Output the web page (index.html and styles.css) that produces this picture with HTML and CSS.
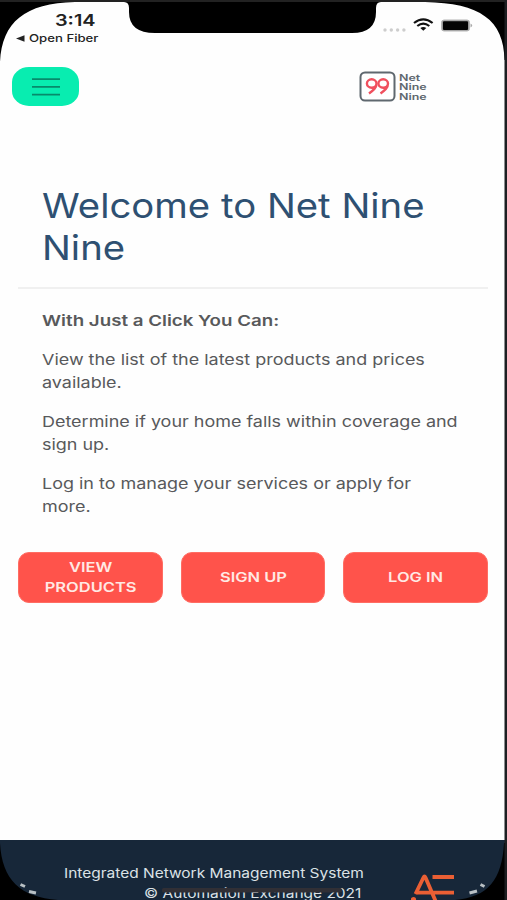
FILE: index.html
```html
<!DOCTYPE html>
<html lang="en">
<head>
  <meta charset="UTF-8">
  <meta name="viewport" content="width=device-width, initial-scale=1">
  <title>Net Nine Nine</title>
  <link rel="stylesheet" href="styles.css">
</head>
<body>
  <div class="phone">
    <div class="status-bar">
      <div class="status-left">
        <div class="time"><span class="wide">3:14</span></div>
        <div class="back-app">
          <svg width="9" height="7" viewBox="0 0 9 7"><path d="M0 3.5L8.5 0.2V6.8z" fill="#222"/></svg>
          <span class="wide">Open Fiber</span>
        </div>
      </div>
      <svg class="status-icons" width="94" height="18" viewBox="0 0 94 18">
        <g fill="#cdcdcd">
          <circle cx="5" cy="13" r="1.700"/><circle cx="11.300" cy="13" r="1.700"/>
          <circle cx="17.600" cy="13" r="1.700"/><circle cx="23.900" cy="13" r="1.700"/>
        </g>
        <g fill="none" stroke="#111" stroke-width="2.200">
          <path d="M34 6Q43.300 -1.400 52.600 6"/>
          <path d="M37.300 9Q43.300 4.300 49.300 9"/>
        </g>
        <path d="M40.300 11Q43.300 8.800 46.300 11L43.300 13.800z" fill="#111"/>
        <rect x="61.500" y="3" width="28" height="11" rx="2.500" fill="#999" stroke="#b5b5b5"/>
        <rect x="63" y="4.200" width="25" height="8.800" rx="1" fill="#050505"/>
        <path d="M90.500 6.500q3.500 2 0 4z" fill="#aaa"/>
      </svg>
    </div>

    <header class="navbar">
      <button class="menu-btn" aria-label="Menu">
        <svg width="30" height="20" viewBox="0 0 30 20">
          <path d="M1 2.200h28M1 9.900h28M1 17.700h28" stroke="#078b6b" stroke-width="1.700"/>
        </svg>
      </button>
      <div class="logo">
        <svg width="37" height="31" viewBox="0 0 37 31">
          <rect x="1.500" y="1.500" width="34" height="28" rx="4.500" fill="#fff" stroke="#5f686f" stroke-width="2"/>
          <g fill="none" stroke="#f0505e" stroke-width="2.400">
            <path d="M17.500 12.500a4.800 4.200 0 1 0-4.800 4.200c2.700 0 4.800-1.600 4.800-4.200c0 4.500-3.200 7-7.500 10"/>
            <path d="M29 12.500a4.800 4.200 0 1 0-4.800 4.200c2.700 0 4.800-1.600 4.800-4.200c0 4.500-3.200 7-7.500 10"/>
          </g>
        </svg>
        <div class="logo-text">
          <span>Net</span>
          <span>Nine</span>
          <span>Nine</span>
        </div>
      </div>
    </header>

    <main class="content">
      <h1><span class="wide">Welcome to Net Nine<br>Nine</span></h1>
      <hr>
      <div class="intro">
        <p class="lead"><span class="wide">With Just a Click You Can:</span></p>
        <p><span class="wide">View the list of the latest products and prices<br>available.</span></p>
        <p><span class="wide">Determine if your home falls within coverage and<br>sign up.</span></p>
        <p><span class="wide">Log in to manage your services or apply for<br>more.</span></p>
      </div>
      <div class="actions">
        <button class="btn"><span class="wide">VIEW<br>PRODUCTS</span></button>
        <button class="btn"><span class="wide">SIGN UP</span></button>
        <button class="btn"><span class="wide">LOG IN</span></button>
      </div>
    </main>

    <footer class="footer">
      <div class="footer-text">
        <div><span class="wide">Integrated Network Management System</span></div>
        <div><span class="wide">© Automation Exchange 2021</span></div>
      </div>
      <svg class="ae-logo" width="46" height="28" viewBox="0 0 46 28" fill="none" stroke="#ea5f34" stroke-width="3.800">
        <path d="M4.500 20L12.500 3.500Q13.500 1.500 14.500 3.500L25 28M4.500 18.700H43M21.500 3H43"/>
        <circle cx="2.500" cy="25.500" r="2.600" fill="#ea5f34" stroke="none"/>
      </svg>
    </footer>

    <!-- device frame: corners, notch, home indicator -->
    <svg class="bezel" width="507" height="900" viewBox="0 0 507 900">
      <path d="M0 0H507V60H504.500C504 20 480 3 425 2H381Q376 2 376 8V12Q376 33 352 33H155Q129 33 129 12V8Q129 2 124 2H75C25 3 2 22 0 62z" fill="#000"/>
      <path d="M0 843C2 880 20 897 58 900H0z" fill="#000"/>
      <path d="M504 843C502 880 488 897 455 900H507V843z" fill="#000"/>
      <rect x="0" y="0" width="507" height="2" fill="#222"/>
      <rect x="504.500" y="0" width="2.500" height="900" fill="#1d1f22"/>
      <rect x="162" y="888" width="180" height="4.500" rx="1.500" fill="#302f35"/>
      <g fill="none" stroke="#b9c0c4" stroke-width="3">
        <path d="M20.500 884.500L25 886.500M29 891.500L36 893"/>
        <path d="M480.500 884.500L484.500 886.500M477 891L469.500 893"/>
      </g>
    </svg>
  </div>
</body>
</html>
```
FILE: styles.css
```css
* {
  box-sizing: border-box;
}

body {
  margin: 0;
  font-family: Inter, "Liberation Sans", sans-serif;
  color: #58595b;
}

.phone {
  position: relative;
  display: flex;
  flex-direction: column;
  width: 507px;
  height: 900px;
  overflow: hidden;
  background: #fefefe;
}

/* stretched lettering */
.wide {
  display: inline-block;
  white-space: nowrap;
  transform: scaleX(1.197);
  transform-origin: left;
}

.status-bar {
  display: flex;
  justify-content: space-between;
  height: 56px;
  padding: 10px 33px 0 16px;
  color: #222;
}

.time {
  height: 20px;
  padding-left: 39px;
  font-size: 16px;
  font-weight: 600;
  line-height: 20px;
}

.time .wide {
  transform: scaleX(1.24);
}

.back-app {
  display: flex;
  align-items: center;
  gap: 4px;
  height: 16px;
  font-size: 11px;
  font-weight: 500;
}

.status-icons {
  margin-top: 7px;
}

.navbar {
  display: flex;
  justify-content: space-between;
  align-items: flex-start;
  height: 129px;
  padding: 11px 79px 0 12px;
}

.menu-btn {
  display: flex;
  align-items: center;
  justify-content: center;
  width: 67px;
  height: 39px;
  padding: 0;
  border: none;
  border-radius: 17px / 15px;
  background: #08edb0;
}

.logo {
  display: flex;
  gap: 3px;
  margin-top: 4px;
}

.logo-text {
  display: flex;
  flex-direction: column;
  width: 29px;
  padding-top: 2px;
  font-size: 9px;
  font-weight: 600;
  line-height: 9.4px;
  color: #5f686f;
}

.logo-text span {
  transform: scaleX(1.38);
  transform-origin: left;
}

.content {
  padding: 0 19px 0 18px;
}

h1 {
  height: 102px;
  margin: 0;
  padding-left: 24px;
  font-size: 34px;
  font-weight: 400;
  line-height: 41.5px;
  color: #2e5072;
}

h1 .wide {
  transform: scaleX(1.127);
}

hr {
  height: 2px;
  margin: 0;
  border: none;
  background: #f0f0f0;
}

.intro {
  padding: 20px 0 0 24px;
  font-size: 15px;
  line-height: 23.3px;
}

.intro p {
  margin: 0 0 15.5px;
}

.intro .lead {
  font-weight: 600;
}

.lead .wide {
  transform: scaleX(1.248);
}

.actions {
  display: flex;
  gap: 18px;
  margin-top: 33px;
}

.btn {
  flex: 1;
  height: 51px;
  padding: 0;
  border: 1px solid #ff6d63;
  border-radius: 11px;
  background: #ff534b;
  color: #ffe9e4;
  font-family: inherit;
  font-size: 13.5px;
  font-weight: 600;
  line-height: 20.5px;
}

.btn .wide {
  transform: scaleX(1.22);
  transform-origin: center;
}

.footer {
  display: flex;
  height: 60px;
  margin-top: auto;
  padding: 23px 0 0 64px;
  background: #172739;
  color: #dce2e6;
  font-size: 13px;
  line-height: 20px;
}

.footer-text {
  width: 347px;
}

.footer-text div + div {
  padding-left: 80px;
}

.footer .wide {
  transform: scaleX(1.19);
}

.ae-logo {
  margin-top: 11px;
}

.bezel {
  position: absolute;
  top: 0;
  left: 0;
}
```
